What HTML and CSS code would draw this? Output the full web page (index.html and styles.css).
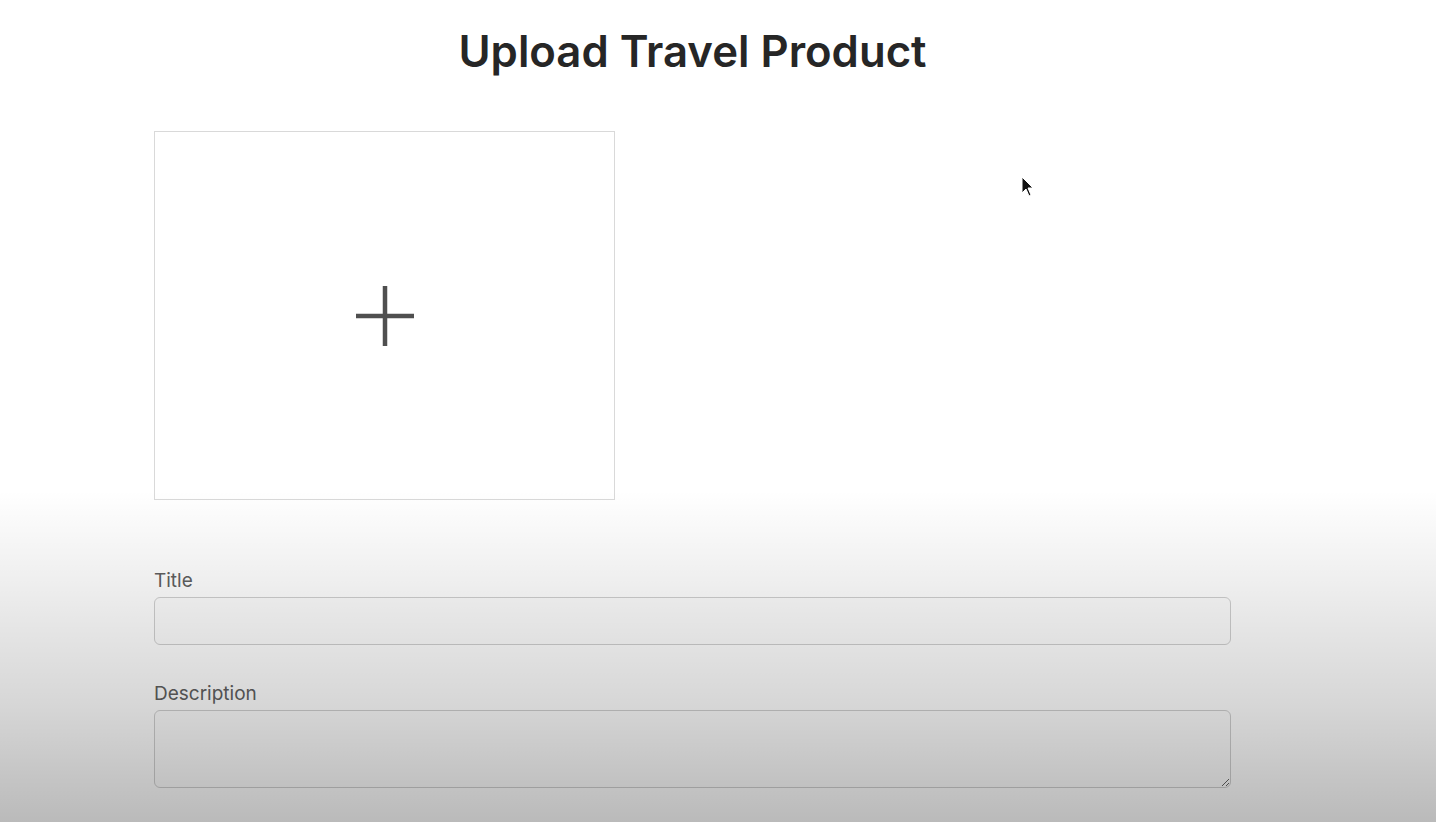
FILE: index.html
```html
<!DOCTYPE html>
<html lang="en">
<head>
    <meta charset="UTF-8">
    <meta name="viewport" content="width=device-width, initial-scale=1.0">
    <title>Upload Travel Product</title>
    <link rel="stylesheet" href="styles.css">
</head>
<body>
    <div class="upload-page">
        <h1>Upload Travel Product</h1>

        <div class="dropzone">
            <svg class="plus-icon" width="58" height="60" viewBox="0 0 58 60">
                <path d="M29 0 V60 M0 30 H58" stroke="#4f4f4f" stroke-width="4.5" fill="none"/>
            </svg>
        </div>

        <form class="product-form">
            <label for="title">Title</label>
            <input type="text" id="title">

            <label for="description">Description</label>
            <textarea id="description"></textarea>
        </form>
    </div>

    <svg class="mouse-cursor" width="14" height="22" viewBox="0 0 14 22">
        <path d="M1 1 L1 17 L5 13 L8 20 L10 19 L7 12 L12 12 Z" fill="#111" stroke="#fff" stroke-width="1"/>
    </svg>

    <div class="fade"></div>
</body>
</html>
```

FILE: styles.css
```css
body {
    font-family: Inter, "Liberation Sans", Arial, sans-serif;
    background-color: #fff;
    margin: 0;
    height: 822px;
    overflow: hidden;
}

.upload-page {
    width: 1077px;
    margin-left: 154px;
    padding-top: 25px;
}

h1 {
    margin: 0;
    text-align: center;
    font-size: 43.7px;
    font-weight: 600;
    color: #262626;
    line-height: 54px;
}

.dropzone {
    margin-top: 52px;
    width: 459px;
    height: 367px;
    border: 1px solid #d9d9d9;
    display: flex;
    justify-content: center;
    align-items: center;
}

.product-form {
    display: flex;
    flex-direction: column;
    margin-top: 69px;
}

label {
    font-size: 19px;
    color: #606060;
    margin-bottom: 5px;
}

input[type="text"],
textarea {
    box-sizing: border-box;
    width: 100%;
    border: 1px solid #d0d0d0;
    border-radius: 6px;
    background-color: #fdfdfd;
    font-family: inherit;
}

input[type="text"] {
    height: 48px;
    margin-bottom: 37px;
}

textarea {
    height: 78px;
    resize: vertical;
}

.mouse-cursor {
    position: absolute;
    left: 1021px;
    top: 176px;
}

.fade {
    position: absolute;
    left: 0;
    right: 0;
    top: 490px;
    bottom: 0;
    background: linear-gradient(to bottom, rgba(0, 0, 0, 0) 0%, rgba(0, 0, 0, 0.06) 25%, rgba(0, 0, 0, 0.16) 65%, rgba(0, 0, 0, 0.27) 100%);
    pointer-events: none;
}
```
